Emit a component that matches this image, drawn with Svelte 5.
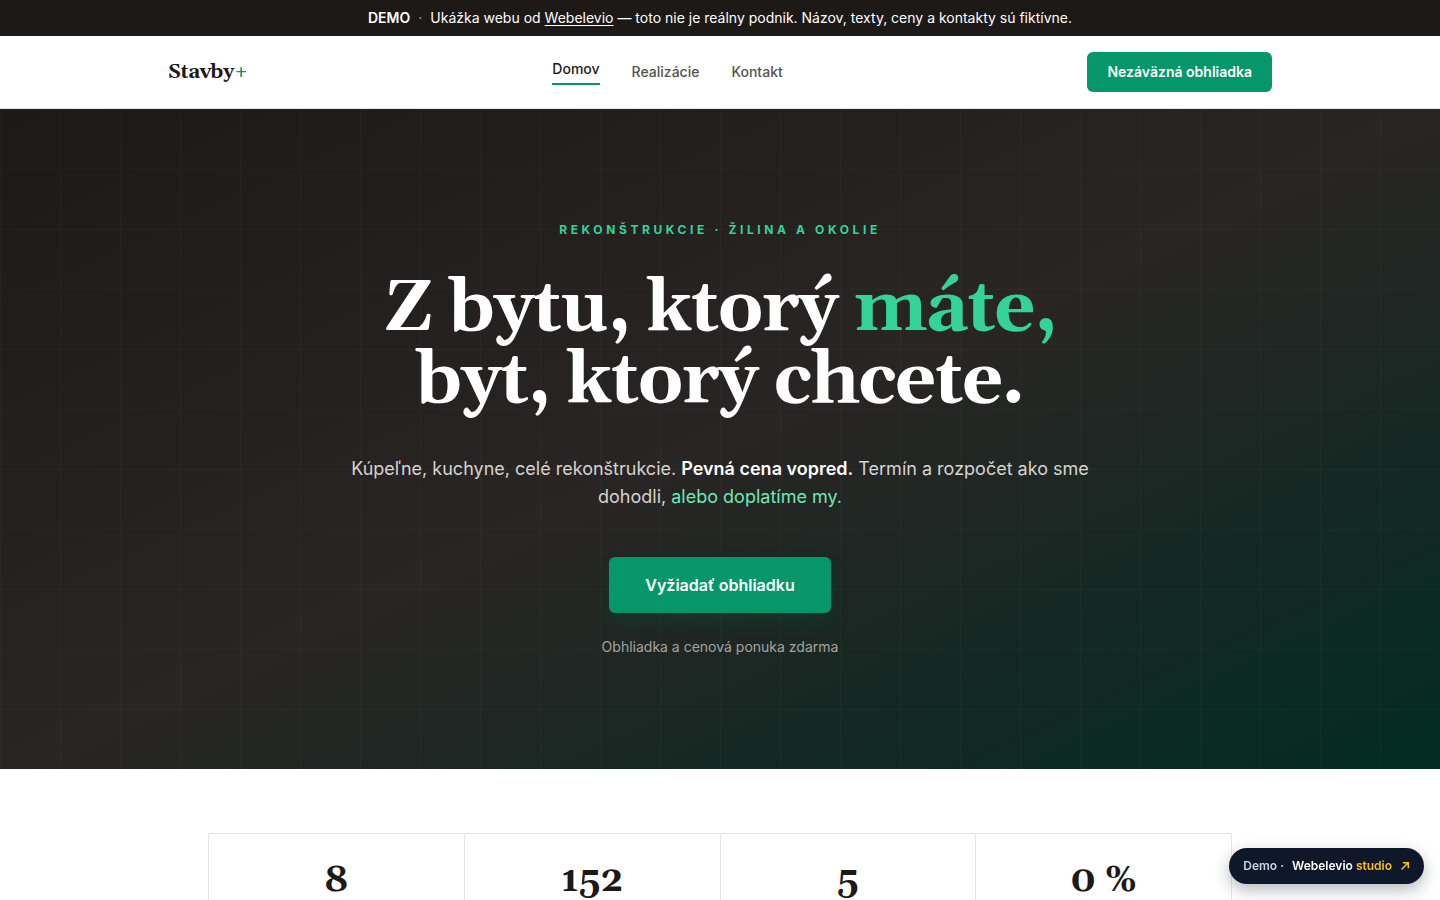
<script>
  const links = [
    { label: 'Domov', href: '#domov', active: true },
    { label: 'Realizácie', href: '#realizacie' },
    { label: 'Kontakt', href: '#kontakt' }
  ];

  const stats = ['8', '152', '5', '0 %'];
</script>

<div class="demo-bar">
  <strong>DEMO</strong>
  <span class="dot">·</span>
  <span>Ukážka webu od <a href="#webelevio">Webelevio</a> — toto nie je reálny podnik. Názov, texty, ceny a kontakty sú fiktívne.</span>
</div>

<header class="header">
  <div class="header-inner">
    <a class="logo" href="#domov">Stavby<span>+</span></a>
    <nav>
      {#each links as link}
        <a href={link.href} class:active={link.active}>{link.label}</a>
      {/each}
    </nav>
    <a class="btn btn-small" href="#obhliadka">Nezáväzná obhliadka</a>
  </div>
</header>

<main>
  <section class="hero">
    <p class="eyebrow">Rekonštrukcie · Žilina a okolie</p>
    <h1>Z bytu, ktorý <span>máte,</span><br />byt, ktorý chcete.</h1>
    <p class="lead">
      Kúpeľne, kuchyne, celé rekonštrukcie. <strong>Pevná cena vopred.</strong> Termín a rozpočet ako sme dohodli, <em>alebo doplatíme my.</em>
    </p>
    <a class="btn btn-large" href="#obhliadka">Vyžiadať obhliadku</a>
    <p class="note">Obhliadka a cenová ponuka zdarma</p>
  </section>

  <section class="stats">
    <div class="stats-grid">
      {#each stats as value}
        <div class="stat">{value}</div>
      {/each}
    </div>
  </section>
</main>

<a class="badge" href="#studio">
  <span class="badge-demo">Demo ·</span>
  <span>Webelevio <span class="gold">studio</span></span>
  <svg width="10" height="10" viewBox="0 0 10 10" fill="none" stroke="currentColor" stroke-width="1.5" aria-hidden="true">
    <path d="M1.5 8.5 8 2M2.8 1.8h5.5v5.5" />
  </svg>
</a>

<style>
  :global(body) {
    background: #fff;
    color: #1c1917;
    font-family: Inter, "Liberation Sans", sans-serif;
    font-size: 14px;
    line-height: 20px;
  }

  p,
  h1 {
    margin: 0;
  }

  a {
    color: inherit;
    text-decoration: none;
  }

  .demo-bar {
    display: flex;
    justify-content: center;
    gap: 8px;
    padding: 8px 16px;
    background: #1c1917;
    color: #fff;
  }

  .demo-bar a {
    text-decoration: underline;
    text-underline-offset: 2px;
  }

  .demo-bar strong {
    font-weight: 600;
  }

  .dot {
    opacity: 0.6;
  }

  .header {
    border-bottom: 1px solid #e7e5e4;
  }

  .header-inner {
    display: flex;
    align-items: center;
    justify-content: space-between;
    max-width: 1104px;
    margin: 0 auto;
    padding: 16px 24px;
  }

  .logo {
    font-family: Georgia, Gelasio, "Liberation Serif", serif;
    font-size: 20px;
    font-weight: 700;
    letter-spacing: -0.02em;
    line-height: 28px;
  }

  .logo span {
    color: #059669;
  }

  nav {
    display: flex;
    align-items: center;
    gap: 32px;
    color: #57534e;
    font-weight: 500;
  }

  nav .active {
    padding-bottom: 4px;
    border-bottom: 2px solid #059669;
    color: #1c1917;
  }

  .btn {
    background: #059669;
    border-radius: 6px;
    color: #fff;
    font-weight: 600;
  }

  .btn-small {
    padding: 10px 20px;
  }

  .hero {
    display: flex;
    flex-direction: column;
    align-items: center;
    padding: 112px 24px;
    background:
      linear-gradient(rgba(255, 255, 255, 0.025) 1px, transparent 1px) 0 0 / 60px 60px,
      linear-gradient(90deg, rgba(255, 255, 255, 0.025) 1px, transparent 1px) 0 0 / 60px 60px,
      linear-gradient(to bottom right, #1c1917 0%, #292524 50%, #022c22 100%);
    text-align: center;
  }

  .eyebrow {
    color: #34d399;
    font-size: 12px;
    font-weight: 700;
    letter-spacing: 0.3em;
    line-height: 18px;
    text-transform: uppercase;
  }

  h1 {
    margin: 34px 0 38px;
    color: #fff;
    font-family: Georgia, Gelasio, "Liberation Serif", serif;
    font-size: 72px;
    font-weight: 700;
    letter-spacing: -0.02em;
    line-height: 72px;
  }

  h1 span {
    color: #34d399;
  }

  .lead {
    max-width: 768px;
    color: #d6d3d1;
    font-size: 18px;
    line-height: 28px;
  }

  .lead strong {
    color: #fff;
    font-weight: 600;
  }

  .lead em {
    color: #6ee7b7;
    font-style: normal;
  }

  .btn-large {
    margin: 46px 0 24px;
    padding: 16px 36px;
    box-shadow: 0 10px 16px rgba(6, 78, 59, 0.3);
    font-size: 16px;
    line-height: 24px;
  }

  .note {
    color: #a8a29e;
  }

  .stats {
    padding: 64px 24px;
  }

  .stats-grid {
    display: grid;
    grid-template-columns: repeat(4, 1fr);
    gap: 1px;
    max-width: 1022px;
    margin: 0 auto;
    border: 1px solid #e7e5e4;
    background: #e7e5e4;
  }

  .stat {
    padding: 28px 24px 64px;
    background: #fff;
    font-family: Georgia, Gelasio, "Liberation Serif", serif;
    font-size: 36px;
    font-weight: 700;
    line-height: 38px;
    text-align: center;
  }

  .badge {
    position: fixed;
    right: 16px;
    bottom: 16px;
    display: flex;
    align-items: center;
    gap: 8px;
    padding: 8px 14px;
    border-radius: 18px;
    background: #0f172a;
    box-shadow: 0 6px 16px rgba(15, 23, 42, 0.3);
    color: #fff;
    font-size: 12px;
    font-weight: 600;
  }

  .badge-demo {
    color: #cbd5e1;
  }

  .gold,
  .badge svg {
    color: #fbbf24;
  }
</style>
